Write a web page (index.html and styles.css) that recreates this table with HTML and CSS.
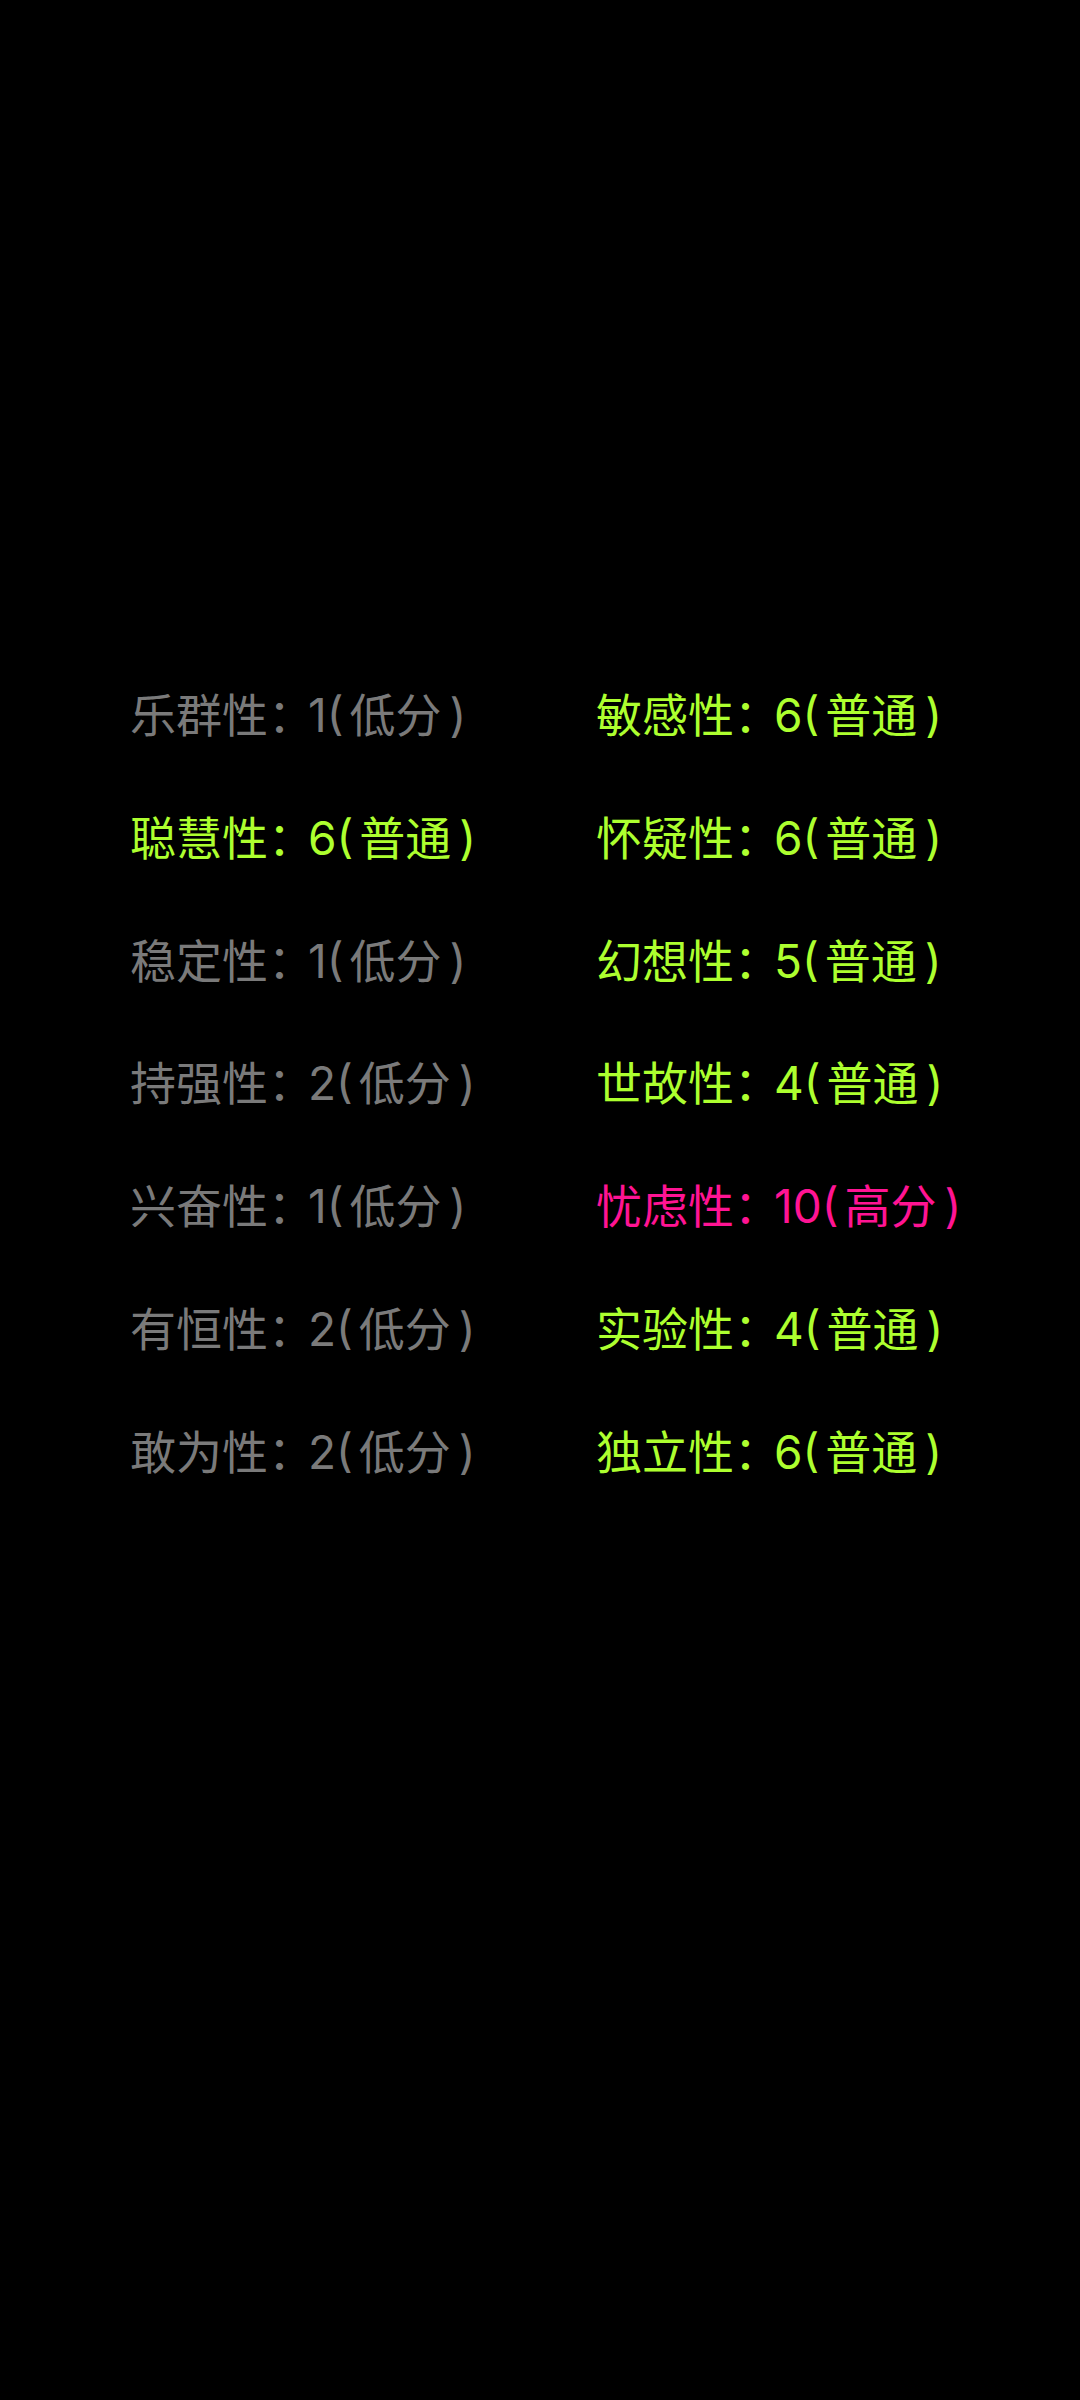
FILE: index.html
```html
<!DOCTYPE html>
<html lang="zh-CN">
<head>
    <meta charset="UTF-8">
    <meta name="viewport" content="width=device-width, initial-scale=1.0">
    <title>16PF</title>
    <link rel="stylesheet" href="styles.css">
</head>
<body>
    <div id="result" class="result"></div>

    <script>
        // left column then right column, row by row
        const traits = [
            ['乐群性', 1, '低分'], ['敏感性', 6, '普通'],
            ['聪慧性', 6, '普通'], ['怀疑性', 6, '普通'],
            ['稳定性', 1, '低分'], ['幻想性', 5, '普通'],
            ['持强性', 2, '低分'], ['世故性', 4, '普通'],
            ['兴奋性', 1, '低分'], ['忧虑性', 10, '高分'],
            ['有恒性', 2, '低分'], ['实验性', 4, '普通'],
            ['敢为性', 2, '低分'], ['独立性', 6, '普通']
        ];
        const levelClass = { '低分': 'low', '普通': 'mid', '高分': 'high' };

        const result = document.getElementById('result');
        traits.forEach(([name, score, level]) => {
            const row = document.createElement('div');
            row.className = 'trait ' + levelClass[level];
            row.innerHTML =
                name + '<span class="colon">：</span>' +
                '<span class="score">' + score + '</span>' +
                '<span class="lp">(</span>' + level + '<span class="rp">)</span>';
            result.appendChild(row);
        });
    </script>
</body>
</html>
```

FILE: styles.css
```css
body {
    margin: 0;
    background-color: #000;
    font-family: Inter, "Noto Sans CJK SC", sans-serif;
    height: 2400px;
}
.result {
    display: grid;
    grid-template-columns: 466px 1fr;
    grid-auto-rows: 122.8px;
    padding-top: 654px;
    padding-left: 130px;
}
.trait {
    font-size: 46px;
    line-height: 122.8px;
    white-space: nowrap;
}
.colon {
    letter-spacing: -6px;
}
.lp {
    margin-right: 6px;
}
.rp {
    margin-left: 8px;
}
.low {
    color: #7a7a7a;
}
.mid {
    color: #adff2f;
}
.high {
    color: #ff1493;
}
```
